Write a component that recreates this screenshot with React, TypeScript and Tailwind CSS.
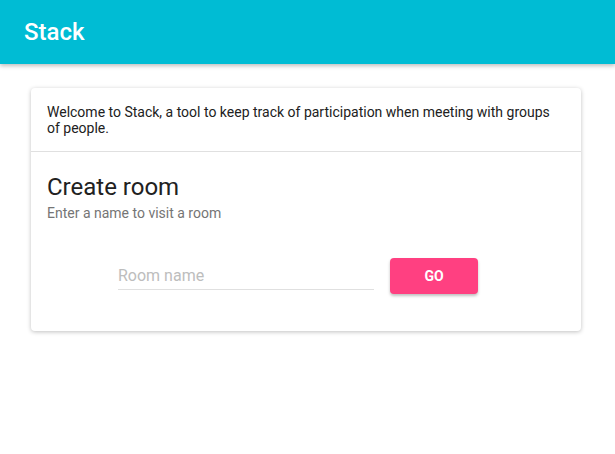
const App = () => {
  return (
    <div className="min-h-[454px] bg-white" style={{ fontFamily: 'Roboto, "Liberation Sans", sans-serif' }}>
      <header className="h-16 bg-[#00bcd4] flex items-center px-6 shadow-[0_2px_4px_rgba(0,0,0,0.25)]">
        <h1 className="text-white text-2xl font-medium">Stack</h1>
      </header>

      <div className="pt-6 px-[31px]">
        <div className="w-[550px] rounded-sm bg-white shadow-[0_1px_4px_rgba(0,0,0,0.25)]">
          <div className="px-4 pt-4 pb-[15px] border-b border-[#e0e0e0]">
            <p className="text-sm leading-4 text-[#212121]">
              Welcome to Stack, a tool to keep track of participation when meeting with groups of people.
            </p>
          </div>

          <div className="px-4 pt-[19px] pb-[37px]">
            <h2 className="text-2xl leading-8 text-[#212121]">Create room</h2>
            <p className="text-sm text-[#757575]">Enter a name to visit a room</p>

            <form className="flex items-start gap-4 mt-[35px] ml-[71px]">
              <input
                type="text"
                placeholder="Room name"
                className="w-[256px] h-8 pt-1 text-base text-[#212121] placeholder-[#bdbdbd] border-b border-[#e0e0e0] focus:outline-none"
              />
              <button
                type="button"
                className="w-[88px] h-9 rounded-sm bg-[#ff4081] text-white text-sm font-bold shadow-[0_2px_3px_rgba(0,0,0,0.25)]"
              >
                GO
              </button>
            </form>
          </div>
        </div>
      </div>
    </div>
  )
}

export default App
